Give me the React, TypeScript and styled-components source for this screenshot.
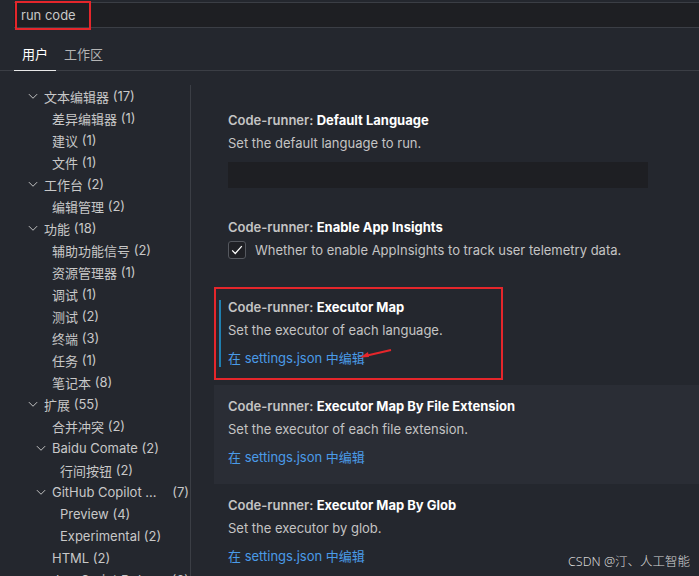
import React from "react";
import styled, { createGlobalStyle } from "styled-components";

const GlobalStyle = createGlobalStyle`
  html, body { margin: 0; padding: 0; background: #24272e; }
  body {
    font-family: "Inter", "Noto Sans", "Noto Sans CJK SC", sans-serif;
    font-size: 13px;
    color: #cccccc;
    overflow: hidden;
    -webkit-font-smoothing: antialiased;
  }
  * { box-sizing: border-box; }
`;

const Page = styled.div`
  position: relative;
  height: 576px;
  display: flex;
  flex-direction: column;
  overflow: hidden;
  background: #24272e;
`;

const SearchBar = styled.div`
  position: relative;
  margin: 2px 0 0 14px;
  height: 26px;
  background: #1e1f23;
  border-top: 1px solid #3b3e45;
  border-bottom: 1px solid #3b3e45;
  display: flex;
  align-items: center;
  padding-left: 7px;
  color: #c8c8c8;
  font-size: 13px;
`;

const Annotation = styled.div<{ $top: number; $left: number; $w: number; $h: number }>`
  position: absolute;
  top: ${(p) => p.$top}px;
  left: ${(p) => p.$left}px;
  width: ${(p) => p.$w}px;
  height: ${(p) => p.$h}px;
  border: 2px solid #e5262b;
  pointer-events: none;
`;

const TabBar = styled.div`
  height: 43px;
  display: flex;
  align-items: flex-end;
  padding-left: 14px;
  border-bottom: 1px solid #3b3e45;
`;

const Tab = styled.div<{ $active?: boolean }>`
  height: 32px;
  line-height: 31px;
  padding: 0 8px;
  margin-bottom: -1px;
  font-size: 13px;
  color: ${(p) => (p.$active ? "#ffffff" : "#b4b4b4")};
  border-bottom: 1px solid ${(p) => (p.$active ? "#e8e8e8" : "transparent")};
`;

const Body = styled.div`
  flex: 1;
  display: flex;
  min-height: 0;
`;

const Tree = styled.div`
  width: 191px;
  flex-shrink: 0;
  margin-top: 14px;
  border-right: 1px solid #3b3e45;
  overflow: hidden;
`;

const Row = styled.div<{ $level: number }>`
  height: 22px;
  display: flex;
  align-items: center;
  padding-left: ${(p) => 26 + p.$level * 8}px;
  padding-right: 1px;
  color: #c8c8c8;
  white-space: nowrap;
`;

const Twistie = styled.span<{ $show: boolean }>`
  width: 14px;
  height: 14px;
  margin-right: 4px;
  flex-shrink: 0;
  display: flex;
  align-items: center;
  justify-content: center;
  visibility: ${(p) => (p.$show ? "visible" : "hidden")};
`;

const Name = styled.span`
  overflow: hidden;
  text-overflow: ellipsis;
  min-width: 0;
`;

const Count = styled.span`
  flex-shrink: 0;
  white-space: pre;
`;

const Content = styled.div`
  flex: 1;
  padding: 28px 0 0 23px;
  overflow: hidden;
`;

const Item = styled.div<{ $hover?: boolean; $focus?: boolean }>`
  position: relative;
  padding: 10px 14px 18px 14px;
  background: ${(p) => (p.$hover ? "#2a2d35" : "transparent")};
  ${(p) =>
    p.$focus
      ? `&::before {
    content: "";
    position: absolute;
    left: 5px;
    top: 14px;
    bottom: 18px;
    width: 2px;
    background: #1f7fb0;
  }`
      : ""}
`;

const Title = styled.div`
  height: 22px;
  line-height: 22px;
  font-weight: 600;
  color: #c4c4c4;
  white-space: nowrap;
`;

const TitleKey = styled.span`
  color: #ffffff;
  font-weight: 700;
`;

const Desc = styled.div`
  margin-top: 3px;
  line-height: 18px;
  color: #c4c4c4;
  white-space: nowrap;
`;

const Input = styled.div`
  margin-top: 10px;
  width: 420px;
  height: 26px;
  background: #1e1f23;
`;

const Link = styled.div`
  margin-top: 10px;
  line-height: 18px;
  color: #4a9be8;
  white-space: nowrap;
`;

const CheckRow = styled.div`
  margin-top: 3px;
  margin-bottom: 9px;
  display: flex;
  align-items: center;
  gap: 9px;
  color: #c4c4c4;
  line-height: 18px;
`;

const CheckBox = styled.div`
  width: 18px;
  height: 18px;
  border: 1px solid #55585f;
  border-radius: 3px;
  background: #1f2025;
  display: flex;
  align-items: center;
  justify-content: center;
`;

const ArrowSvg = styled.svg`
  position: absolute;
  left: 145px;
  top: 60px;
  overflow: visible;
`;

const Watermark = styled.div`
  position: absolute;
  right: 9px;
  bottom: 6px;
  color: #d6d6d6;
  font-size: 12.5px;
  font-family: "Noto Sans", "Noto Sans CJK SC", sans-serif;
  font-weight: 300;
`;

type Node = { level: number; name: string; count: string; open?: boolean };

const nodes: Node[] = [
  { level: 0, name: "文本编辑器", count: " (17)", open: true },
  { level: 1, name: "差异编辑器", count: " (1)" },
  { level: 1, name: "建议", count: " (1)" },
  { level: 1, name: "文件", count: " (1)" },
  { level: 0, name: "工作台", count: " (2)", open: true },
  { level: 1, name: "编辑管理", count: " (2)" },
  { level: 0, name: "功能", count: " (18)", open: true },
  { level: 1, name: "辅助功能信号", count: " (2)" },
  { level: 1, name: "资源管理器", count: " (1)" },
  { level: 1, name: "调试", count: " (1)" },
  { level: 1, name: "测试", count: " (2)" },
  { level: 1, name: "终端", count: " (3)" },
  { level: 1, name: "任务", count: " (1)" },
  { level: 1, name: "笔记本", count: " (8)" },
  { level: 0, name: "扩展", count: " (55)", open: true },
  { level: 1, name: "合并冲突", count: " (2)" },
  { level: 1, name: "Baidu Comate", count: " (2)", open: true },
  { level: 2, name: "行间按钮", count: " (2)" },
  { level: 1, name: "GitHub Copilot Chat", count: "   (7)", open: true },
  { level: 2, name: "Preview", count: " (4)" },
  { level: 2, name: "Experimental", count: " (2)" },
  { level: 1, name: "HTML", count: " (2)" },
  { level: 1, name: "JavaScript Debugger", count: " (6)" },
];

const Chevron = () => (
  <svg width="12" height="12" viewBox="0 0 16 16" fill="none">
    <path d="M2.5 5.5 L8 11 L13.5 5.5" stroke="#c5c5c5" strokeWidth="1.3" strokeLinejoin="round" />
  </svg>
);

const Check = () => (
  <svg width="14" height="14" viewBox="0 0 16 16" fill="none">
    <path d="M2.5 8.5 L6 12 L13.5 3.5" stroke="#ffffff" strokeWidth="1.4" />
  </svg>
);

export default function App() {
  return (
    <Page>
      <GlobalStyle />
      <SearchBar>run code</SearchBar>
      <Annotation $top={1} $left={15} $w={76} $h={29} />
      <TabBar>
        <Tab $active>用户</Tab>
        <Tab>工作区</Tab>
      </TabBar>
      <Body>
        <Tree>
          {nodes.map((n, i) => (
            <Row key={i} $level={n.level}>
              <Twistie $show={!!n.open}>
                <Chevron />
              </Twistie>
              <Name>{n.name}</Name>
              <Count>{n.count}</Count>
            </Row>
          ))}
        </Tree>
        <Content>
          <Item>
            <Title>
              Code-runner: <TitleKey>Default Language</TitleKey>
            </Title>
            <Desc>Set the default language to run.</Desc>
            <Input />
          </Item>
          <Item>
            <Title>
              Code-runner: <TitleKey>Enable App Insights</TitleKey>
            </Title>
            <CheckRow>
              <CheckBox>
                <Check />
              </CheckBox>
              Whether to enable AppInsights to track user telemetry data.
            </CheckRow>
          </Item>
          <Item $focus>
            <Title>
              Code-runner: <TitleKey>Executor Map</TitleKey>
            </Title>
            <Desc>Set the executor of each language.</Desc>
            <Link>在 settings.json 中编辑</Link>
            <Annotation $top={1} $left={0} $w={289} $h={93} />
            <ArrowSvg width="30" height="12" viewBox="0 0 30 12">
              <line x1="32" y1="4" x2="6" y2="10" stroke="#e5262b" strokeWidth="2" />
              <polygon points="1,11.5 9,6 10,11" fill="#e5262b" />
            </ArrowSvg>
          </Item>
          <Item $hover>
            <Title>
              Code-runner: <TitleKey>Executor Map By File Extension</TitleKey>
            </Title>
            <Desc>Set the executor of each file extension.</Desc>
            <Link>在 settings.json 中编辑</Link>
          </Item>
          <Item>
            <Title>
              Code-runner: <TitleKey>Executor Map By Glob</TitleKey>
            </Title>
            <Desc>Set the executor by glob.</Desc>
            <Link>在 settings.json 中编辑</Link>
          </Item>
        </Content>
      </Body>
      <Watermark>CSDN @汀、人工智能</Watermark>
    </Page>
  );
}
